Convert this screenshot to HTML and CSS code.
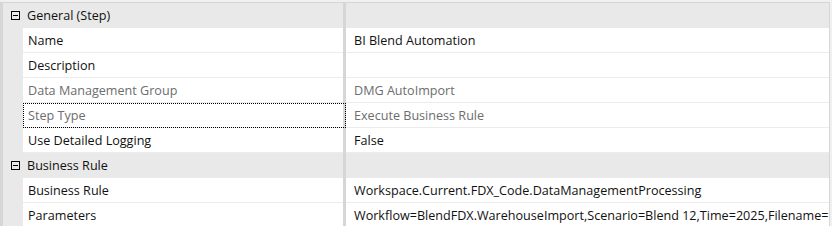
FILE: index.html
```html
<!DOCTYPE html>
<html>
<head>
    <title>Step Properties</title>
    <link rel="stylesheet" href="styles.css">
</head>
<body>
    <div class="grid">
        <div class="category">
            <div class="cat-name"><span class="toggle"></span>General (Step)</div>
            <div class="cat-value"></div>
        </div>
        <div class="row">
            <div class="margin"></div>
            <div class="name">Name</div>
            <div class="value">BI Blend Automation</div>
        </div>
        <div class="row">
            <div class="margin"></div>
            <div class="name">Description</div>
            <div class="value"></div>
        </div>
        <div class="row disabled">
            <div class="margin"></div>
            <div class="name">Data Management Group</div>
            <div class="value">DMG AutoImport</div>
        </div>
        <div class="row disabled">
            <div class="margin"></div>
            <div class="name focused">Step Type</div>
            <div class="value">Execute Business Rule</div>
        </div>
        <div class="row">
            <div class="margin"></div>
            <div class="name">Use Detailed Logging</div>
            <div class="value">False</div>
        </div>
        <div class="category">
            <div class="cat-name"><span class="toggle"></span>Business Rule</div>
            <div class="cat-value"></div>
        </div>
        <div class="row">
            <div class="margin"></div>
            <div class="name">Business Rule</div>
            <div class="value">Workspace.Current.FDX_Code.DataManagementProcessing</div>
        </div>
        <div class="row">
            <div class="margin"></div>
            <div class="name">Parameters</div>
            <div class="value">Workflow=BlendFDX.WarehouseImport,Scenario=Blend 12,Time=2025,Filename=</div>
        </div>
    </div>
</body>
</html>
```

FILE: styles.css
```css
body {
    margin: 0;
    background-color: #f0f0f0;
    font-family: "Open Sans", "Noto Sans", sans-serif;
    font-size: 12.6px;
    color: #111111;
}
.grid {
    width: 826px;
    margin-top: 2px;
    border-top: 1px solid #d6d6d6;
    border-left: 3px solid #d6d6d6;
    border-right: 1px solid #d6d6d6;
    background-color: #ffffff;
    height: 230px;
    overflow: hidden;
}
.category,
.row {
    display: grid;
    grid-template-columns: 20px 320px 3px 1fr;
    height: 24px;
    border-bottom: 1px solid #ececec;
}
.category {
    grid-template-columns: 340px 3px 1fr;
    background-color: #e9e9e9;
    border-bottom-color: #e9e9e9;
}
.cat-name {
    display: flex;
    align-items: center;
    gap: 7px;
    padding-left: 8px;
    grid-column: 1;
}
.cat-value {
    grid-column: 3;
}
.category::before {
    content: "";
    grid-column: 2;
    grid-row: 1;
    background-color: #d6d6d6;
    margin-bottom: -1px;
}
.toggle {
    width: 7px;
    height: 7px;
    border: 1px solid #000;
    position: relative;
    flex: none;
}
.toggle::after {
    content: "";
    position: absolute;
    left: 1px;
    right: 1px;
    top: 3px;
    height: 1px;
    background-color: #000;
}
.margin {
    background-color: #e9e9e9;
    margin-bottom: -1px;
}
.name,
.value {
    display: flex;
    align-items: center;
    white-space: nowrap;
    overflow: hidden;
}
.name {
    padding-left: 5px;
    border-right: 3px solid #d6d6d6;
    grid-column: 2 / span 2;
    margin-bottom: -1px;
}
.value {
    grid-column: 4;
    padding-left: 8px;
}
.disabled .name,
.disabled .value {
    color: #6d6d6d;
}
.name.focused {
    outline: 1px dotted #000;
    outline-offset: -1px;
}
```
